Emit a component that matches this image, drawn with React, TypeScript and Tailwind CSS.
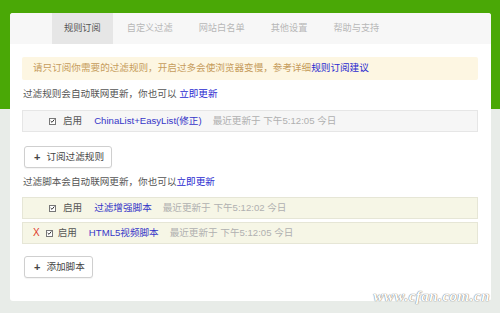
import React from 'react';

const font = { fontFamily: '"Liberation Sans", "Noto Sans CJK SC", sans-serif' };

const tabs = ['规则订阅', '自定义过滤', '网站白名单', '其他设置', '帮助与支持'];

// tiny checked checkbox like the old webkit one
const Check = () => (
  <span className="inline-flex h-[7px] w-[7px] items-center justify-center border border-[#777] bg-white">
    <svg width="6" height="6" viewBox="0 0 6 6">
      <path d="M0.8 3 L2.4 4.6 L5.2 1.2" stroke="#333" strokeWidth="1.2" fill="none" />
    </svg>
  </span>
);

interface RowProps {
  name: string;
  time: string;
  removable?: boolean;
  tone?: 'gray' | 'cream';
}

const Row: React.FC<RowProps> = ({ name, time, removable, tone = 'gray' }) => (
  <div
    className={`flex h-[22px] items-center border ${
      tone === 'cream' ? 'border-[#e6e6d6] bg-[#f6f6e6]' : 'border-[#e6e6e6] bg-[#f6f6f6]'
    } ${removable ? 'pl-[10px]' : 'pl-[26px]'}`}
  >
    {removable && <span className="mr-[6px] text-[10px] leading-none text-[#e03a2a]">X</span>}
    <Check />
    <span className={`${removable ? 'ml-[5px]' : 'ml-[7px]'} text-[#555]`}>启用</span>
    <span className="ml-[12px] text-[#3535c8]">{name}</span>
    <span className="ml-[11px] text-[#b0b0b0]">最近更新于 下午{time} 今日</span>
  </div>
);

const AddButton: React.FC<{ label: string }> = ({ label }) => (
  <button className="ml-[2px] flex h-[22px] items-center gap-[6px] self-start rounded-[3px] border border-[#cfcfcf] bg-white pl-[9px] pr-[7px] text-[#444] shadow-[0_1px_1px_rgba(0,0,0,0.05)]">
    <span className="text-[11px] font-bold leading-none">+</span>
    <span>{label}</span>
  </button>
);

export default function App() {
  return (
    <div
      className="relative h-[313px] w-[500px] overflow-hidden bg-[linear-gradient(to_bottom,#4aa806_109px,#e8ece8_109px)] pt-[13px] pl-[10px] pr-[9px] text-[9.6px]"
      style={font}
    >
      <div className="h-[288px] overflow-hidden rounded-[3px] bg-white">
        {/* tab bar */}
        <div className="flex h-[31px] gap-[2px] bg-[#f7f7f7] pl-[42px]">
          {tabs.map((t, i) => (
            <div
              key={t}
              className={`flex items-center px-[12px] text-[9.2px] ${
                i === 0 ? 'bg-[#e6e6e6] text-[#555]' : 'text-[#b8b8b8]'
              }`}
            >
              {t}
            </div>
          ))}
        </div>

        <div className="flex flex-col pt-[13px] pl-[12px] pr-[13px]">
          <div className="flex h-[23px] items-center rounded-[2px] bg-[#fdf6e2] pl-[11px] text-[#c69c5c]">
            请只订阅你需要的过滤规则，开启过多会使浏览器变慢，参考详细
            <span className="text-[#2a2ad0]">规则订阅建议</span>
          </div>

          <div className="mt-[6px] flex h-[16px] items-center pl-[1px] text-[#555]">
            过滤规则会自动联网更新，你也可以&nbsp;
            <span className="text-[#2a2ad0]">立即更新</span>
          </div>

          <div className="mt-[8px]">
            <Row name="ChinaList+EasyList(修正)" time="5:12:05" />
          </div>

          <div className="mt-[14px] flex">
            <AddButton label="订阅过滤规则" />
          </div>

          <div className="mt-[6px] flex h-[16px] items-center pl-[1px] text-[#555]">
            过滤脚本会自动联网更新，你也可以
            <span className="text-[#2a2ad0]">立即更新</span>
          </div>

          <div className="mt-[7px] flex flex-col gap-[3px]">
            <Row name="过滤增强脚本" time="5:12:02" tone="cream" />
            <Row name="HTML5视频脚本" time="5:12:05" tone="cream" removable />
          </div>

          <div className="mt-[12px] flex">
            <AddButton label="添加脚本" />
          </div>
        </div>
      </div>

      {/* watermark */}
      <div
        className="absolute bottom-[6px] right-[10px] text-[15px] font-bold italic tracking-[0.5px] text-white"
        style={{ fontFamily: '"Liberation Serif", serif', textShadow: '0 0 1px #777, 0 0 1px #777' }}
      >
        www.cfan.com.cn
      </div>
    </div>
  );
}
